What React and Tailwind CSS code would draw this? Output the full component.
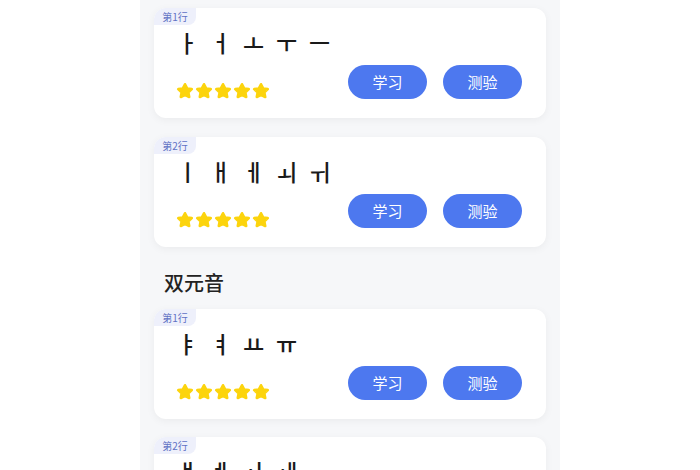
import React from "react";

const rows = [
  { label: "第1行", chars: ["ㅏ", "ㅓ", "ㅗ", "ㅜ", "ㅡ"] },
  { label: "第2行", chars: ["ㅣ", "ㅐ", "ㅔ", "ㅚ", "ㅟ"] },
];

const rows2 = [
  { label: "第1行", chars: ["ㅑ", "ㅕ", "ㅛ", "ㅠ"] },
  { label: "第2行", chars: ["ㅒ", "ㅖ", "ㅘ", "ㅙ"] },
];

const Star = () => (
  <svg width="18" height="18" viewBox="0 0 24 24">
    <polygon
      points="12,3 14.8,8.6 21,9.5 16.5,13.9 17.6,20 12,17.1 6.4,20 7.5,13.9 3,9.5 9.2,8.6"
      fill="#fcd40d"
      stroke="#fcd40d"
      strokeWidth="3.5"
      strokeLinejoin="round"
    />
  </svg>
);

const Card = ({ label, chars }) => (
  <div className="relative bg-white rounded-xl shadow-[0_2px_8px_rgba(0,0,0,0.05)] h-[110px]">
    <div className="absolute left-0 top-0 w-[42px] h-[17px] rounded-tl-xl rounded-br-lg bg-[#eef0fb] text-[#5f70c4] text-[10px] leading-[17px] text-center">
      {label}
    </div>
    <div className="flex flex-col pl-[22px] pr-6 pt-[20px]">
      <div className="flex gap-[10px] text-[23px] leading-[28px] font-medium text-[#1a1a1a] font-['Noto_Sans_CJK_KR',sans-serif]">
        {chars.map((c, i) => (
          <span key={i} className="w-[23px] text-center">{c}</span>
        ))}
      </div>
      <div className="flex items-end justify-between mt-[9px]">
        <div className="flex gap-[1px] mb-[-1px]">
          {[0, 1, 2, 3, 4].map((i) => (
            <Star key={i} />
          ))}
        </div>
        <div className="flex gap-4">
          <button className="w-[79px] h-[34px] rounded-full bg-[#4d78ef] text-white text-[15px]">学习</button>
          <button className="w-[79px] h-[34px] rounded-full bg-[#4d78ef] text-white text-[15px]">测验</button>
        </div>
      </div>
    </div>
  </div>
);

export default function App() {
  return (
    <div className="w-full h-[470px] bg-white overflow-hidden font-['Noto_Sans_CJK_SC',sans-serif]">
      <div className="w-[420px] h-full mx-auto bg-[#f6f7f9] px-[14px] pt-2 flex flex-col">
        <div className="flex flex-col gap-[19px]">
          {rows.map((r, i) => (
            <Card key={i} {...r} />
          ))}
        </div>
        <h2 className="mt-[24px] mb-[14px] px-[10px] text-[20px] leading-[24px] font-medium text-[#222]">双元音</h2>
        <div className="flex flex-col gap-[18px]">
          {rows2.map((r, i) => (
            <Card key={i} {...r} />
          ))}
        </div>
      </div>
    </div>
  );
}
